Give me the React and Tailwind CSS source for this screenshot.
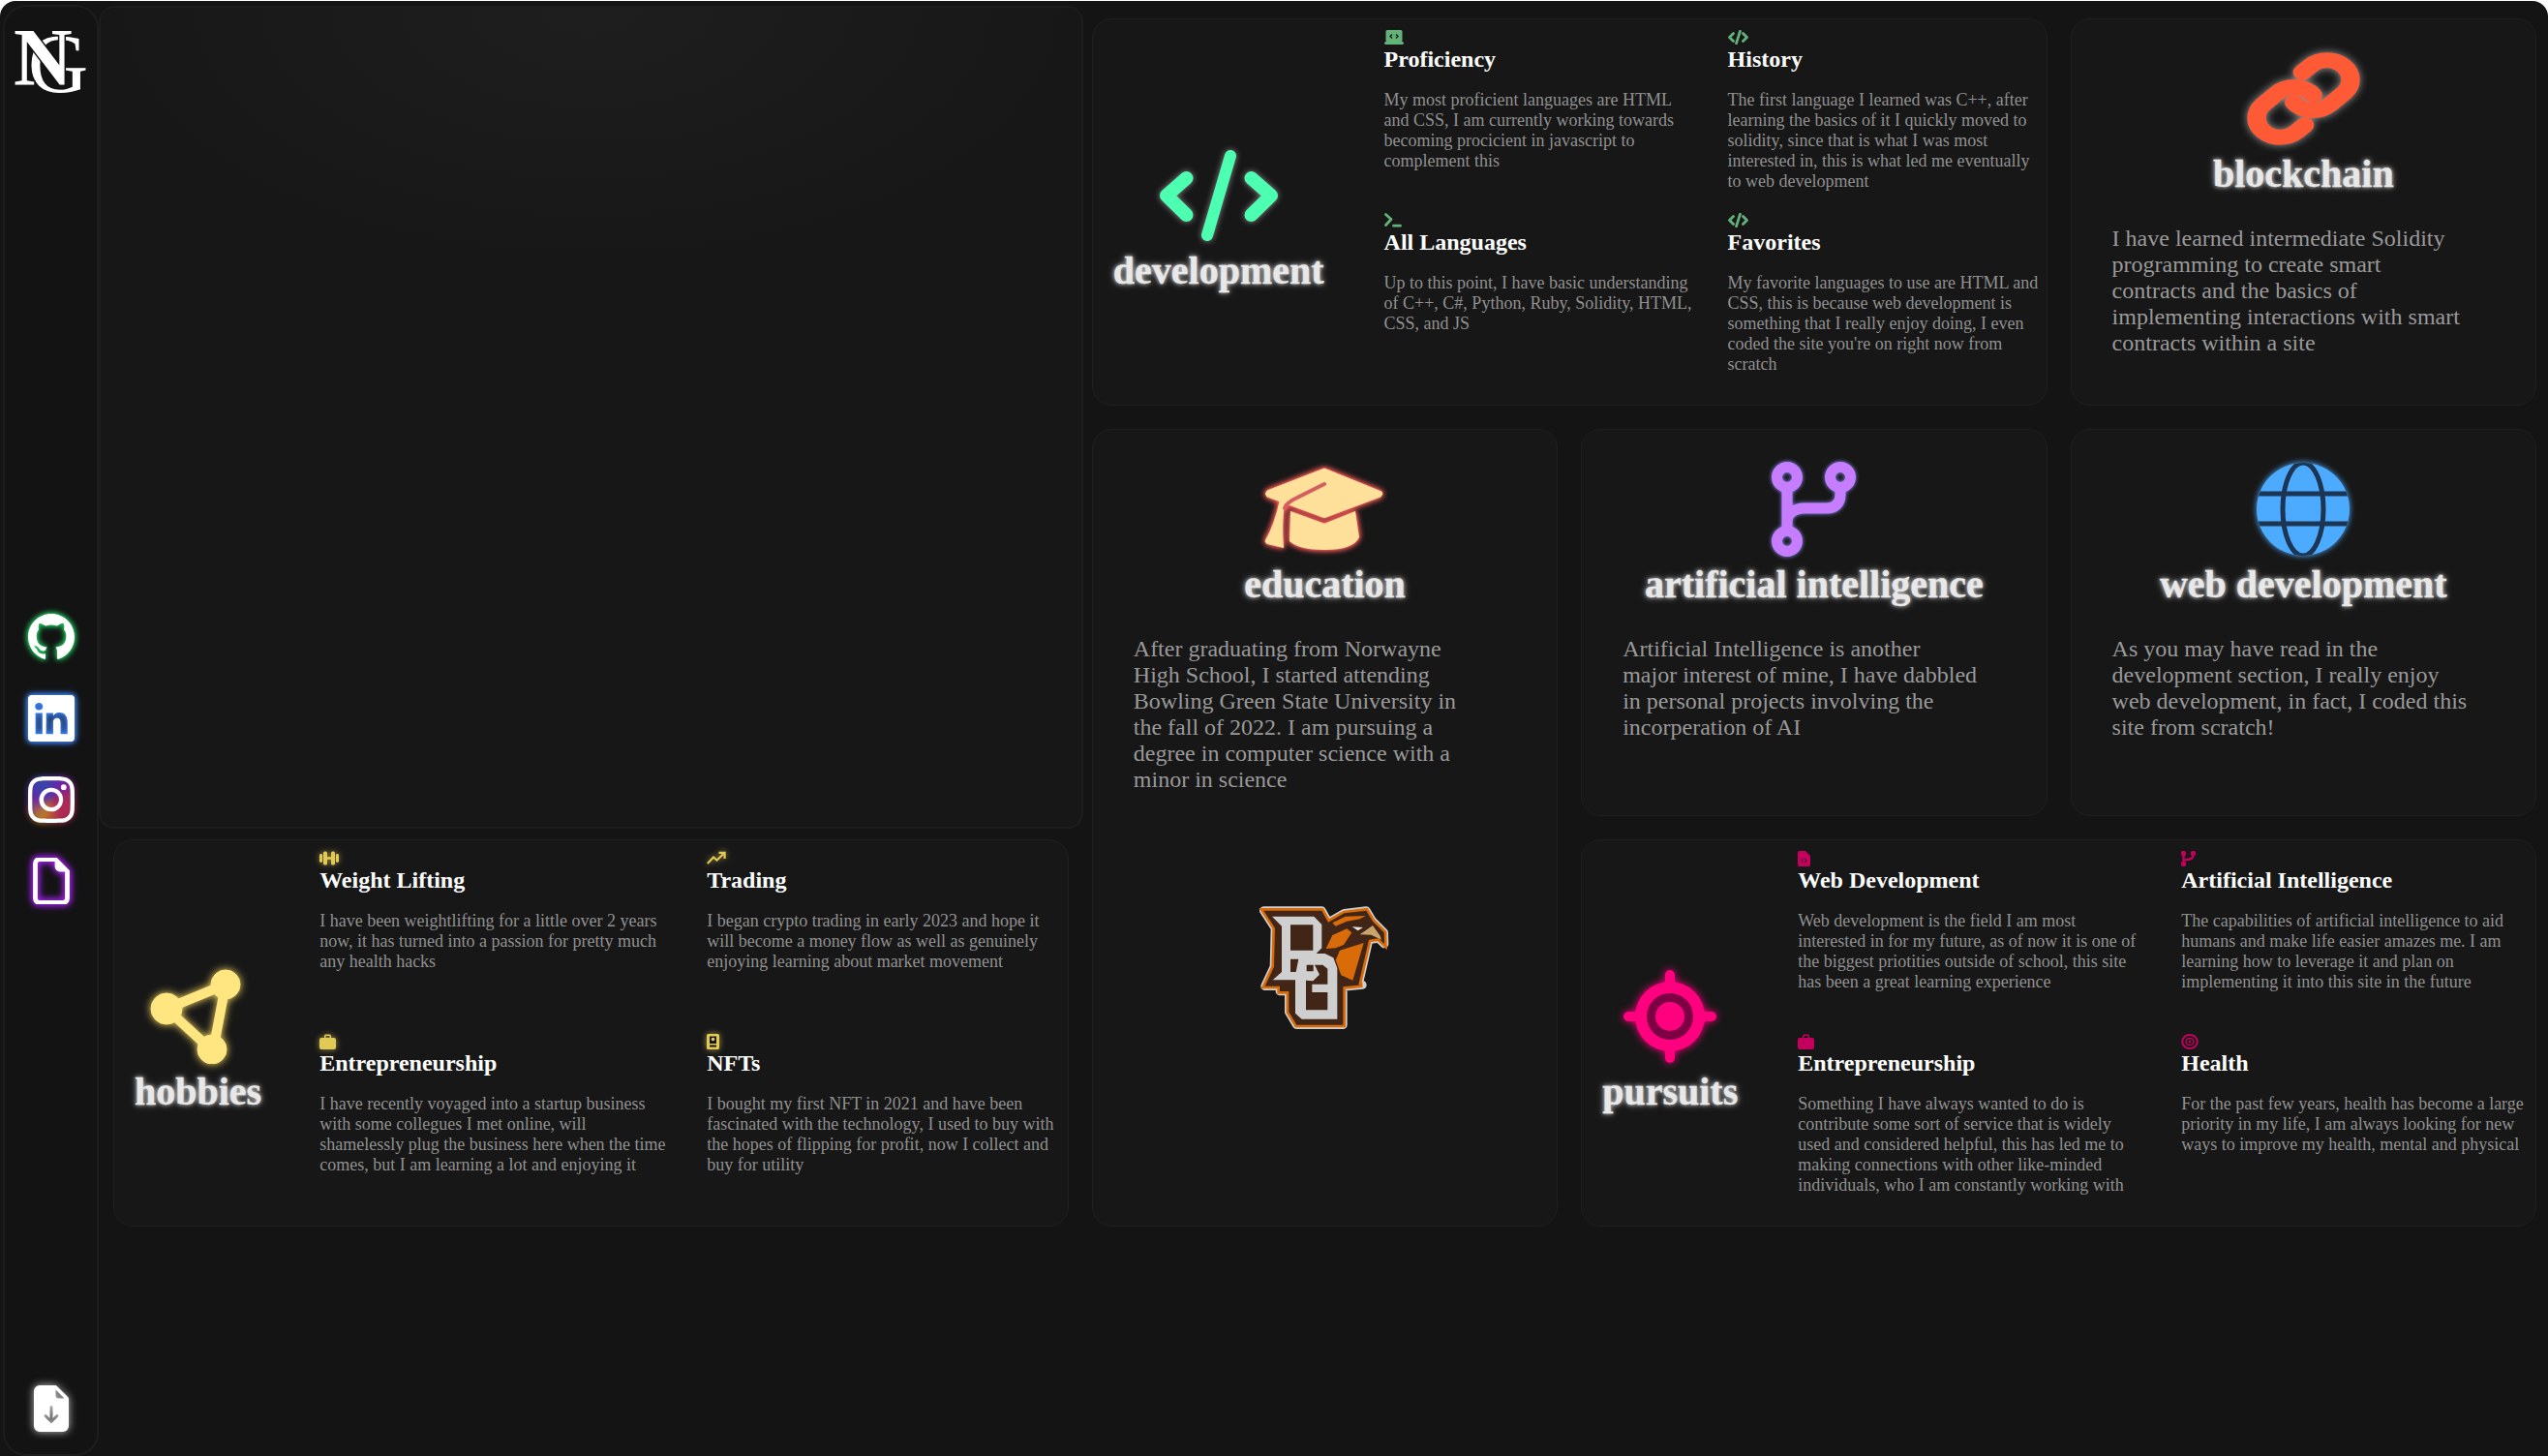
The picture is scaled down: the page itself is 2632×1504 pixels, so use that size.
import React from "react";
import { BsGithub, BsLinkedin, BsInstagram, BsFileEarmark, BsFileEarmarkArrowDownFill } from "react-icons/bs";

const Laptop = () => (
  <svg width="20" height="15" viewBox="0 0 20 15" className="text-[#63b27a]">
    <rect x="1.5" y="0" width="17" height="12" rx="1.5" fill="currentColor" />
    <rect x="0" y="12" width="20" height="3" rx="1.5" fill="currentColor" />
    <path d="M8 4.5 6 6.5 8 8.5M12 4.5l2 2-2 2" fill="none" stroke="#171717" strokeWidth="1.3" />
  </svg>
);
const CodeSm = () => (
  <svg width="21" height="15" viewBox="0 0 21 15" fill="none" stroke="#63b27a" strokeWidth="2.8" strokeLinecap="round" strokeLinejoin="round">
    <path d="M5.5 3.5 1.500 7.500l4 4M15.500 3.500l4 4-4 4M12.500 1.200 8.500 13.800" />
  </svg>
);
const Terminal = () => (
  <svg width="18" height="15" viewBox="0 0 18 15" fill="none" stroke="#63b27a" strokeWidth="2.8" strokeLinecap="round" strokeLinejoin="round">
    <path d="M1.500 1.500 7 6.500l-5.500 6M9.500 13.200h7" />
  </svg>
);
const yGlow = "[filter:drop-shadow(0_0_3px_#ffe06699)]";
const Dumbbell = () => (
  <svg width="20" height="15" viewBox="0 0 20 15" className={yGlow} fill="#e0ca55">
    <rect x="0" y="3" width="3" height="9" rx="1.4" />
    <rect x="4" y="0.5" width="4" height="14" rx="1.5" />
    <rect x="12" y="0.5" width="4" height="14" rx="1.5" />
    <rect x="17" y="3" width="3" height="9" rx="1.4" />
    <rect x="7" y="6.2" width="6" height="2.6" />
  </svg>
);
const Trend = () => (
  <svg width="20" height="15" viewBox="0 0 20 15" className={yGlow} fill="none" stroke="#e0ca55" strokeWidth="2.2">
    <path d="M0.8 13 7 6.500l3.500 3L18 2.500M12.500 1.800H18.600V8" />
  </svg>
);
const Brief = ({ color = "#e0ca55", cls = yGlow }) => (
  <svg width="17" height="16" viewBox="0 0 17 16" className={cls} fill={color}>
    <path d="M5 4V2.200C5 1 5.800.4 7 .4h3c1.200 0 2 .6 2 1.800V4h3a2 2 0 0 1 2 2v8a2 2 0 0 1-2 2H2a2 2 0 0 1-2-2V6a2 2 0 0 1 2-2h3Zm1.500 0h4V2H6.500v2Z" fillRule="evenodd" />
  </svg>
);
const Nft = () => (
  <svg width="13" height="16" viewBox="0 0 13 16" className={yGlow}>
    <rect x="0" y="0" width="13" height="16" rx="1.500" fill="#e0ca55" />
    <rect x="3" y="2.500" width="7" height="7.500" fill="#171717" />
    <circle cx="6.500" cy="5.500" r="1.800" fill="#e0ca55" />
    <rect x="3" y="11.500" width="7" height="2" fill="#171717" />
  </svg>
);
const pink = "#c4005e";
const FileCode = () => (
  <svg width="13" height="16" viewBox="0 0 13 16">
    <path d="M1.500 0H8l5 5v9.500a1.500 1.500 0 0 1-1.500 1.500h-10A1.500 1.500 0 0 1 0 14.500v-13A1.500 1.500 0 0 1 1.500 0Z" fill={pink} />
    <path d="M5.500 8 4 10l1.500 2M7.500 8 9 10l-1.500 2" fill="none" stroke="#171717" strokeWidth="1" />
  </svg>
);
const BranchSm = () => (
  <svg width="15" height="16" viewBox="0 0 15 16" fill="none" stroke={pink} strokeWidth="2.400">
    <circle cx="2.500" cy="2.500" r="1.500" />
    <circle cx="2.500" cy="13.500" r="1.500" />
    <circle cx="12.500" cy="2.500" r="1.500" />
    <path d="M2.500 4v8M12.500 4c0 4-2 4.500-10 5.500" />
  </svg>
);
const TargetSm = () => (
  <svg width="18" height="16" viewBox="0 0 18 16" fill="none" stroke={pink}>
    <ellipse cx="9" cy="8" rx="7.800" ry="7" strokeWidth="2" />
    <ellipse cx="9" cy="8" rx="4" ry="3.600" strokeWidth="1.500" />
    <circle cx="9" cy="8" r="1" fill={pink} />
  </svg>
);

const CodeBig = () => (
  <svg width="128" height="128" viewBox="0 0 128 128" className="my-[-16px] shrink-0 [filter:drop-shadow(0_0_3px_#ffffff80)]" fill="none" stroke="#4dffb0" strokeLinecap="round" strokeLinejoin="round">
    <path d="M30.500 46 10 64l20.500 20M97.500 46 118 64 97.500 84" strokeWidth="14" />
    <path d="M76 23 52 105" strokeWidth="12" />
  </svg>
);
const LinkBig = () => (
  <svg width="117" height="96" viewBox="0 0 24 24" preserveAspectRatio="none" className="shrink-0 [filter:drop-shadow(0_0_4px_#ffffff90)]" fill="none" stroke="#ff5a36" strokeWidth="4" strokeLinecap="round" strokeLinejoin="round">
    <path d="M10 13a5 5 0 0 0 7.540.54l3-3a5 5 0 0 0-7.070-7.070l-1.720 1.710" />
    <path d="M14 11a5 5 0 0 0-7.540-.54l-3 3a5 5 0 0 0 7.070 7.070l1.710-1.710" />
  </svg>
);
const CapBig = () => (
  <svg width="124" height="96" viewBox="0 -5 124 96" className="shrink-0 [filter:drop-shadow(0_0_3px_#ff5c5c)_drop-shadow(0_0_1px_#ff5c5c)]">
    <g fill="#ffe09a">
      <path d="M62 1 121 25 Q123 27 120 30 L64 51 Q62 52 60 51 L3 30 Q0 27 3 24 Z" stroke="#ffe09a" strokeWidth="1" strokeLinejoin="round" />
      <path d="M27 45 60 57 Q62 58 64 57 L94 45 98 72 Q92 85 62 85 Q36 85 26 76 Z" />
      <path d="M16 33 21 36 Q18 60 20 83 L3 79 Q0 77 1 75 Q10 60 16 33Z" />
    </g>
    <path d="M62 17 34 31 Q23 36 21 42" fill="none" stroke="#d45f5f" strokeWidth="4" strokeLinecap="round" />
  </svg>
);
const BranchBig = () => (
  <svg width="96" height="98" viewBox="0 0 96 98" className="ml-[8px] shrink-0 [filter:drop-shadow(0_0_2px_#8f8fff)]" fill="none" stroke="#c77dff" strokeWidth="11">
    <circle cx="16" cy="16" r="10.500" />
    <circle cx="16" cy="82" r="10.500" />
    <circle cx="71" cy="16" r="10.500" />
    <path d="M16 26v46M71 26v8c0 9-5 14-14 14H34c-10 0-18 5-18 14" />
  </svg>
);
const GlobeBig = () => (
  <svg width="98" height="98" viewBox="0 0 98 98" className="shrink-0 [filter:drop-shadow(0_0_3px_#4dabff)]">
    <clipPath id="globe-clip"><circle cx="49" cy="49" r="48" /></clipPath>
    <circle cx="49" cy="49" r="48" fill="#4dabff" />
    <g fill="none" stroke="#1c3553" strokeWidth="5" clipPath="url(#globe-clip)">
      <ellipse cx="49" cy="49" rx="21" ry="48" />
      <path d="M0 33h98M0 64h98" />
    </g>
  </svg>
);
const TriBig = () => (
  <svg width="96" height="98" viewBox="0 0 96 98" className="-ml-[4px] shrink-0 [filter:drop-shadow(0_0_4px_#ffe066)]" fill="#ffe680" stroke="#ffe680">
    <path d="M78 16 17 41 65 85Z" fill="none" strokeWidth="10" />
    <circle cx="78" cy="16" r="15" />
    <circle cx="17" cy="41" r="16" />
    <circle cx="64" cy="83" r="15" />
  </svg>
);
const TargetBig = () => (
  <svg width="96" height="98" viewBox="0 0 96 98" className="shrink-0 [filter:drop-shadow(0_0_4px_#ff007f)]">
    <g stroke="#ff007f" strokeWidth="10" strokeLinecap="round">
      <path d="M48 6v86M5 49h86" />
    </g>
    <circle cx="48" cy="49" r="36" fill="#ff007f" />
    <circle cx="48" cy="49" r="24" fill="#7d0045" />
    <circle cx="48" cy="49" r="15" fill="#ff007f" />
  </svg>
);

const BgLogo = () => {
  const sil = "M172 122H352L372 158 422 130 490 122 510 155 545 190 546 225 528 208 498 212 466 352H478L418 358V476H274L250 436V372H222V356H176L204 296 207 176Z";
  return (
    <svg width="240" height="180" viewBox="0 0 720 540" className="-my-[30px]">
      <path d={sil} fill="#412516" stroke="#cfcfcf" strokeWidth="26" strokeLinejoin="round" />
      <path d={sil} fill="#412516" stroke="#d96c08" strokeWidth="16" strokeLinejoin="miter" />
      <path d={sil} fill="#412516" stroke="none" />
      <path d="M385 160 425 140 488 138 470 148 430 155 395 170Z" fill="#d96c08" />
      <path d="M365 240 385 198 430 178 445 190 420 228 395 238 Z" fill="#d96c08" />
      <path d="M408 245 482 222 448 338 412 322 395 275Z" fill="#d96c08" />
      <path d="M470 196 510 168 533 200 537 212 505 197Z" fill="#c9a46c" />
      <path d="M446 172 480 174 464 184Z" fill="#e8e8e8" />
      <path fillRule="evenodd" fill="#cfcfcf" d="M198 140H328L352 165V238L335 255H362L388 268 400 300V350H370V302L355 290H330L345 320 325 340 303 338V430H370V375H322V350H400V458H290L270 440V337H200L228 312V170ZM255 166V245H325V166ZM255 272V312H272L280 272ZM305 290V310H326V290Z" />
    </svg>
  );
};

const Logo = () => (
  <div className="relative h-[110px] w-full font-['Liberation_Serif',serif] text-white">
    <span className="absolute left-[24px] top-[16px] text-[86px] leading-none">G</span>
    <span className="absolute left-[9px] top-[11px] text-[84px] font-bold leading-none [-webkit-text-stroke:3px_#131313] [paint-order:stroke]">N</span>
  </div>
);

const InstaGlow = () => (
  <div className="relative h-[48px] w-[48px]">
    <div className="absolute inset-0 rounded-[14px] bg-[conic-gradient(from_210deg,#f5a623,#8a2be2,#3b5bdb,#8a2be2,#e1306c,#e1306c,#f5a623)] opacity-75 blur-[3px]" />
    <BsInstagram size={48} className="relative text-white" />
  </div>
);

const Sidebar = () => (
  <aside className="ml-[3px] mt-[4px] flex w-[99px] shrink-0 flex-col items-center rounded-[24px] border-2 border-[#1d1d1d] bg-[#131313] pb-[23px]">
    <Logo />
    <div className="mt-[517px] flex flex-col items-center gap-[36px]">
      <BsGithub size={48} className="text-white [filter:drop-shadow(0_0_3px_#22c55e)_drop-shadow(0_0_1px_#22c55e)]" />
      <BsLinkedin size={48} className="text-white [filter:drop-shadow(0_0_3px_#3b82f6)_drop-shadow(0_0_2px_#3b82f6)]" />
      <InstaGlow />
      <BsFileEarmark size={48} className="stroke-white text-white [stroke-width:0.6] [filter:drop-shadow(0_0_3px_#a020f0)_drop-shadow(0_0_3px_#a020f0)]" />
    </div>
    <BsFileEarmarkArrowDownFill size={48} className="mt-auto text-white [filter:drop-shadow(0_0_4px_#ffffffc0)]" />
  </aside>
);

const titleCls = "text-[40px] font-bold leading-[46px] text-[#e8e8e8] [-webkit-text-stroke:0.3px_#e8e8e8] [text-shadow:0_0_4px_#ffffffd0,0_0_8px_#ffffff70]";
const bigText = "ml-[42px] mt-[30px] w-[367px] self-start text-[24px] leading-[27px] text-[#999999]";

const TextCard = ({ icon, title, text, className = "" }) => (
  <section className={`flex flex-col items-center rounded-[20px] border border-[#202020] bg-[#171717] ${className}`}>
    <div className="mt-[34px] flex h-[96px] items-center justify-center">{icon}</div>
    <h2 className={`mt-[7px] ${titleCls}`}>{title}</h2>
    <p className={bigText}>{text}</p>
  </section>
);

const Item = ({ icon, title, text }) => (
  <div>
    <div className="flex h-[17px] items-start">{icon}</div>
    <h3 className="text-[24px] font-bold leading-[27px] text-white">{title}</h3>
    <p className="mt-[18px] text-[18px] leading-[21px] text-[#909090]">{text}</p>
  </div>
);

const DetailCard = ({ icon, title, gridCls, items, gapCls = "mr-[60px]", className = "" }) => (
  <section className={`flex rounded-[20px] border border-[#202020] bg-[#171717] pl-[21px] pt-[11px] ${className}`}>
    <div className={`${gapCls} mt-[19px] flex shrink-0 flex-col items-center justify-center self-stretch pb-[12px]`}>
      <div className="flex h-[96px] w-[96px] items-center justify-center">{icon}</div>
      <h2 className={`mt-[7px] ${titleCls}`}>{title}</h2>
    </div>
    <div className={`grid grid-rows-[189px_189px] ${gridCls}`}>
      {items.map((it) => (
        <Item key={it.title} {...it} />
      ))}
    </div>
  </section>
);

const dev = [
  { icon: <Laptop />, title: "Proficiency", text: "My most proficient languages are HTML and CSS, I am currently working towards becoming procicient in javascript to complement this" },
  { icon: <CodeSm />, title: "History", text: "The first language I learned was C++, after learning the basics of it I quickly moved to solidity, since that is what I was most interested in, this is what led me eventually to web development" },
  { icon: <Terminal />, title: "All Languages", text: "Up to this point, I have basic understanding of C++, C#, Python, Ruby, Solidity, HTML, CSS, and JS" },
  { icon: <CodeSm />, title: "Favorites", text: "My favorite languages to use are HTML and CSS, this is because web development is something that I really enjoy doing, I even coded the site you're on right now from scratch" },
];
const hobbies = [
  { icon: <Dumbbell />, title: "Weight Lifting", text: "I have been weightlifting for a little over 2 years now, it has turned into a passion for pretty much any health hacks" },
  { icon: <Trend />, title: "Trading", text: "I began crypto trading in early 2023 and hope it will become a money flow as well as genuinely enjoying learning about market movement" },
  { icon: <Brief />, title: "Entrepreneurship", text: "I have recently voyaged into a startup business with some collegues I met online, will shamelessly plug the business here when the time comes, but I am learning a lot and enjoying it" },
  { icon: <Nft />, title: "NFTs", text: "I bought my first NFT in 2021 and have been fascinated with the technology, I used to buy with the hopes of flipping for profit, now I collect and buy for utility" },
];
const pursuits = [
  { icon: <FileCode />, title: "Web Development", text: "Web development is the field I am most interested in for my future, as of now it is one of the biggest priotities outside of school, this site has been a great learning experience" },
  { icon: <BranchSm />, title: "Artificial Intelligence", text: "The capabilities of artificial intelligence to aid humans and make life easier amazes me. I am learning how to leverage it and plan on implementing it into this site in the future" },
  { icon: <Brief color={pink} cls="" />, title: "Entrepreneurship", text: "Something I have always wanted to do is contribute some sort of service that is widely used and considered helpful, this has led me to making connections with other like-minded individuals, who I am constantly working with" },
  { icon: <TargetSm />, title: "Health", text: "For the past few years, health has become a large priority in my life, I am always looking for new ways to improve my health, mental and physical" },
];

export default function App() {
  return (
    <div className="h-[1504px] w-full overflow-hidden bg-white pt-px font-['Liberation_Serif',serif]">
      <div className="flex h-full rounded-t-[16px] bg-[#141414]">
        <Sidebar />
        <main className="grid min-w-0 flex-1 grid-cols-5 grid-rows-[400px_400px_400px] gap-6 self-start pl-[15px] pr-[12px] pt-[18px]">
          <div className="col-start-1 col-end-3 row-start-1 row-end-3 -mx-[15px] -my-[13px] rounded-[16px] border-2 border-[#1d1d1d] bg-[#171717] bg-[radial-gradient(ellipse_500px_260px_at_50%_0%,#1e1e1e,#171717)]" />
          <DetailCard className="col-start-3 col-end-5 row-start-1" gapCls="mr-[62px]" icon={<CodeBig />} title="development" gridCls="grid-cols-[325px_325px] gap-x-[30px]" items={dev} />
          <TextCard className="col-start-5 row-start-1" icon={<LinkBig />} title="blockchain" text="I have learned intermediate Solidity programming to create smart contracts and the basics of implementing interactions with smart contracts within a site" />
          <div className="col-start-3 row-start-2 row-end-4 flex flex-col items-center rounded-[20px] border border-[#202020] bg-[#171717]">
            <div className="mt-[34px] flex h-[96px] items-center justify-center"><CapBig /></div>
            <h2 className={`mt-[7px] ${titleCls}`}>education</h2>
            <p className={bigText}>After graduating from Norwayne High School, I started attending Bowling Green State University in the fall of 2022. I am pursuing a degree in computer science with a minor in science</p>
            <div className="mt-[111px]"><BgLogo /></div>
          </div>
          <TextCard className="col-start-4 row-start-2" icon={<BranchBig />} title="artificial intelligence" text="Artificial Intelligence is another major interest of mine, I have dabbled in personal projects involving the incorperation of AI" />
          <TextCard className="col-start-5 row-start-2" icon={<GlobeBig />} title="web development" text="As you may have read in the development section, I really enjoy web development, in fact, I coded this site from scratch!" />
          <DetailCard className="col-start-1 col-end-3 row-start-3" icon={<TriBig />} title="hobbies" gridCls="grid-cols-[360px_360px] gap-x-[40px]" items={hobbies} />
          <DetailCard className="col-start-4 col-end-6 row-start-3" gapCls="mr-[62px]" icon={<TargetBig />} title="pursuits" gridCls="grid-cols-[355px_355px] gap-x-[41px]" items={pursuits} />
        </main>
      </div>
    </div>
  );
}
